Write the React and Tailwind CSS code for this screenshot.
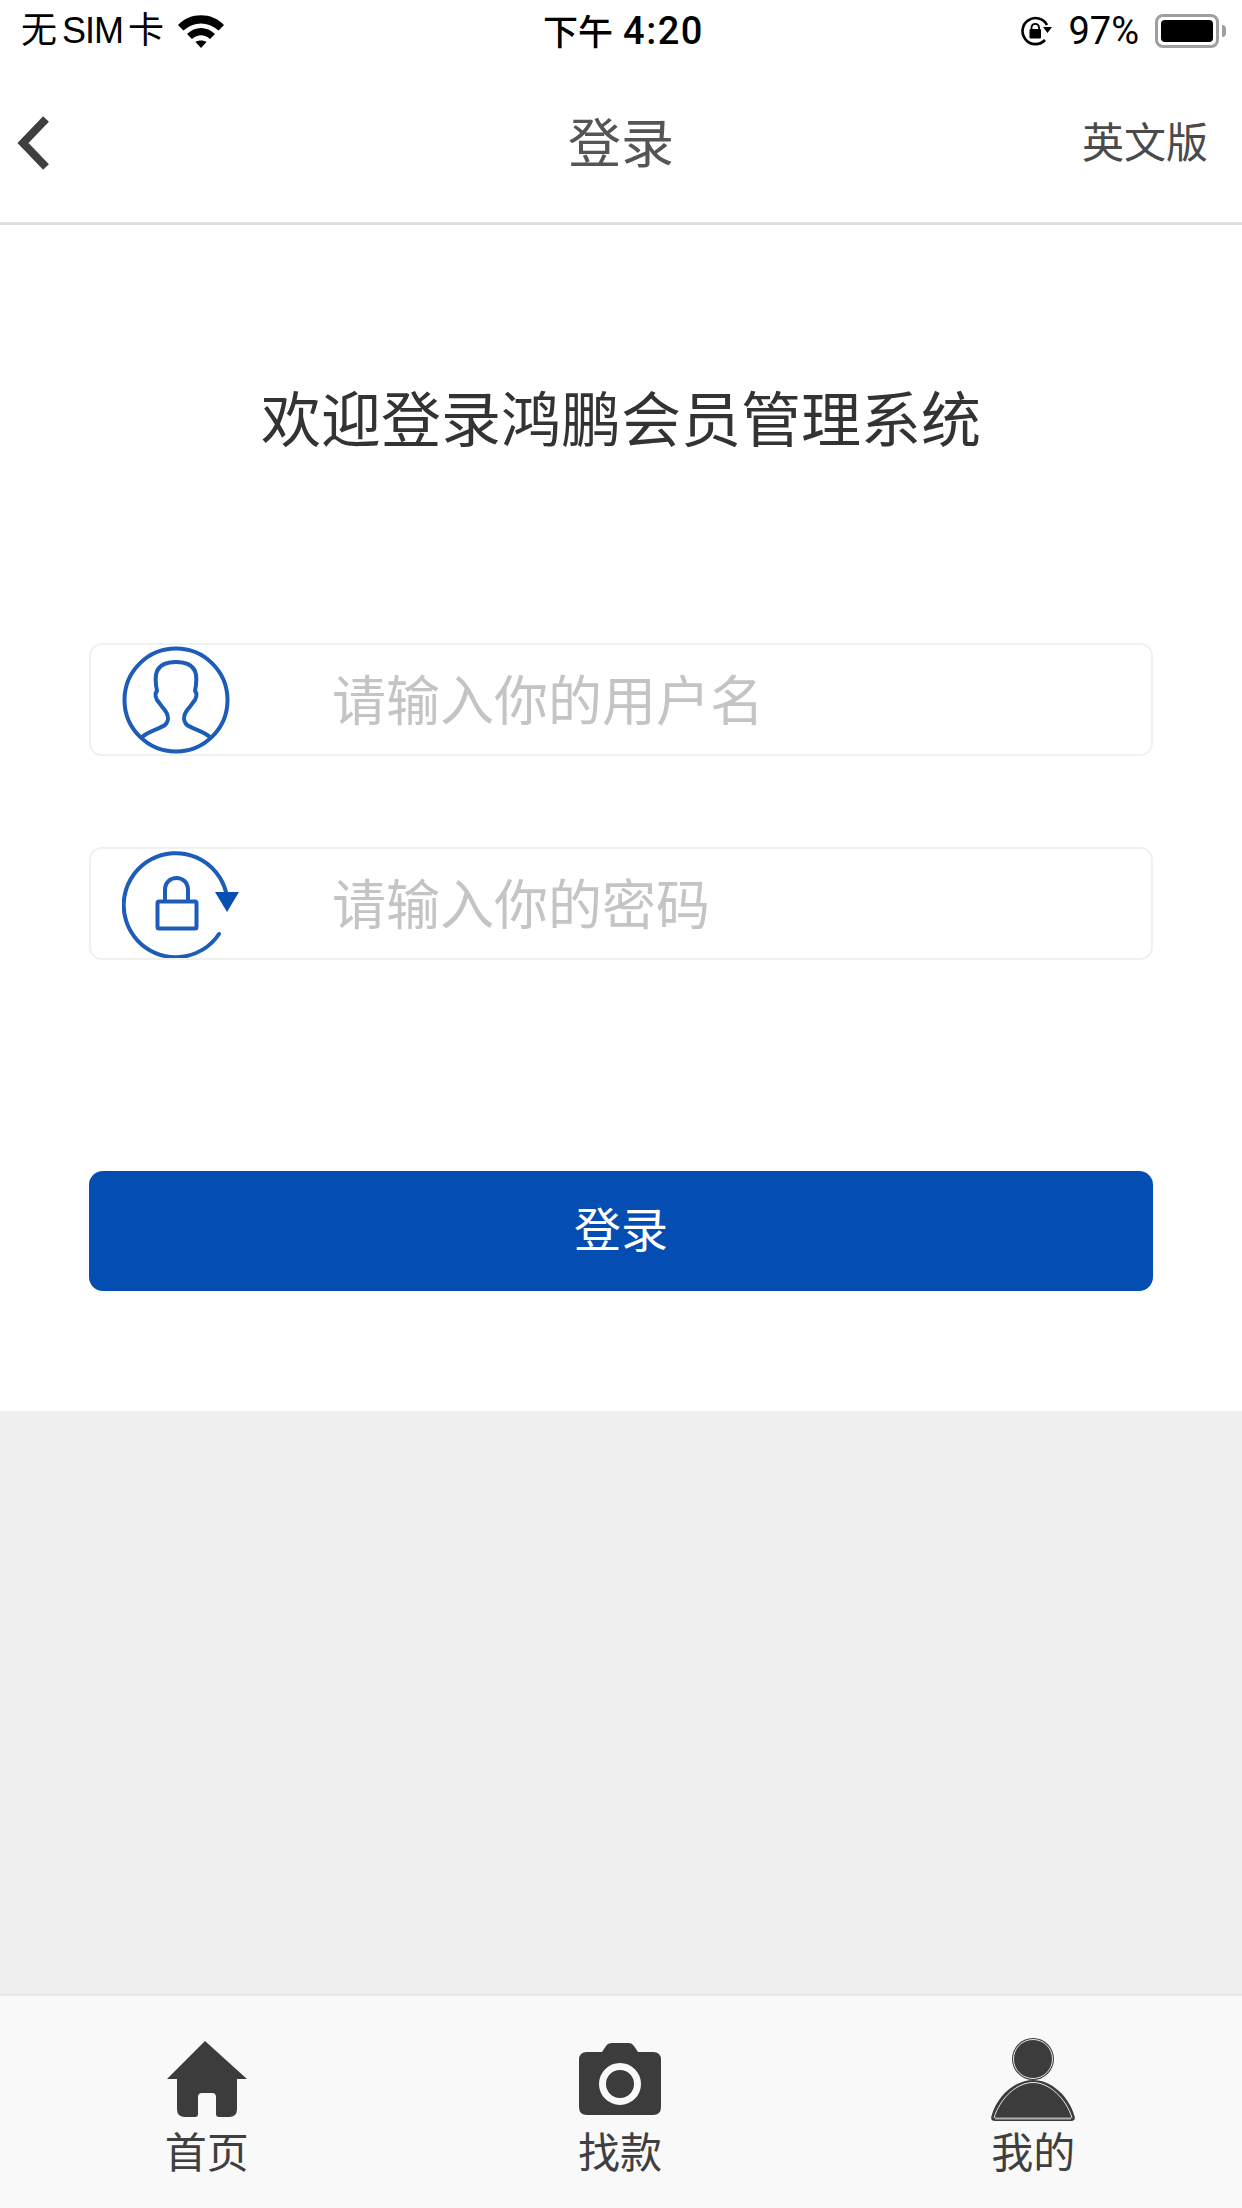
const CJK = '"Noto Sans CJK SC", "Liberation Sans", sans-serif';
const SYS = '"Liberation Sans", "Noto Sans CJK SC", sans-serif';
const NUM = 'Roboto, "Liberation Sans", sans-serif';

function Wifi() {
  return (
    <svg width="46" height="33" viewBox="0 0 46 33">
      <path d="M0 10 C12 -3 34 -3 46 10 L40.500 15.500 C30 6 16 6 5.500 15.500 Z" fill="#000" />
      <path d="M9 19 C17 11 29 11 37 19 L32 24 C26 19 20 19 14 24 Z" fill="#000" />
      <path d="M17.500 27 C20 25 26 25 28.500 27 L23 33 Z" fill="#000" />
    </svg>
  );
}

function RotationLock() {
  return (
    <svg width="32" height="30" viewBox="0 0 32 30">
      <path d="M25 24 A13 13 0 1 1 27 9" fill="none" stroke="#000" strokeWidth="2.600" />
      <path d="M23 11 L32 11 L27.500 17 Z" fill="#000" />
      <rect x="9.500" y="13" width="11.500" height="9.500" rx="1" fill="#000" />
      <path d="M11.500 13 V11 A3.800 3.800 0 0 1 19 11 V13" fill="none" stroke="#000" strokeWidth="1.800" />
    </svg>
  );
}

function Battery() {
  return (
    <div className="flex items-center">
      <div className="w-[64px] h-[34px] rounded-[8px] border-[3px] border-[#9f9f9f] p-[3px]">
        <div className="w-full h-full rounded-[4px] bg-black" />
      </div>
      <div className="w-[4px] h-[12px] ml-[3px] rounded-r-full bg-[#9f9f9f]" />
    </div>
  );
}

function UserIcon() {
  return (
    <svg width="108" height="108" viewBox="0 0 108 108" fill="none" stroke="#1d5cb8" strokeWidth="4">
      <circle cx="54" cy="54" r="51.500" />
      <path d="M20 91 C27 85 37 83 43 79 C47 75 47 69 42 63 C39 60 37 56 35 54 C33 50 33 47 35 45 C32 30 32 16 54 16 C76 16 76 30 73 45 C75 47 75 50 73 54 C71 56 69 60 66 63 C61 69 61 75 65 79 C71 83 81 85 88 91" strokeLinejoin="round" />
    </svg>
  );
}

function LockIcon() {
  return (
    <svg width="118" height="108" viewBox="0 0 118 108" fill="none" stroke="#1d5cb8" strokeWidth="4">
      <path d="M97 84 A52 52 0 1 1 104 42" strokeLinecap="round" />
      <path d="M93 42 L117 42 L105 62 Z" fill="#0a4db3" stroke="none" />
      <rect x="35.500" y="51.500" width="39" height="27" rx="1.500" />
      <path d="M43 51 V40 C43 24 66 24 66 40 V51" />
    </svg>
  );
}

function HomeIcon() {
  return (
    <svg width="80" height="76" viewBox="0 0 80 76">
      <path d="M38 0 L80 38 L70 38 L70 68 Q70 76 62 76 L52 76 Q49 76 49 73 L49 56 Q49 52 45 52 L35 52 Q31 52 31 56 L31 73 Q31 76 28 76 L18 76 Q10 76 10 68 L10 38 L0 38 Z" fill="#3c3c3c" />
    </svg>
  );
}

function CameraIcon() {
  return (
    <svg width="82" height="72" viewBox="0 0 82 72">
      <path d="M8 9 H23 L27 3 Q29 0 33 0 H50 Q53 0 55 3 L59 9 H74 Q82 9 82 17 V64 Q82 72 74 72 H8 Q0 72 0 64 V17 Q0 9 8 9 Z" fill="#3c3c3c" />
      <circle cx="41" cy="41" r="17.500" fill="none" stroke="#f9f9f9" strokeWidth="7" />
    </svg>
  );
}

function PersonIcon() {
  return (
    <svg width="84" height="83" viewBox="0 0 84 83">
      <circle cx="42" cy="21" r="21" fill="#3c3c3c" />
      <circle cx="42" cy="21" r="19.500" fill="none" stroke="#e6e6e6" strokeWidth="1" />
      <path d="M4 83 Q-1 83 0.500 78 C6 58 24 42 42 42 C60 42 78 58 83.500 78 Q85 83 80 83 Z" fill="#3c3c3c" />
      <path d="M3 80 C9 60 26 44.500 42 44.500 C58 44.500 75 60 81 80" fill="none" stroke="#e6e6e6" strokeWidth="1" />
      <path d="M4 80.500 H80" fill="none" stroke="#b0b0b0" strokeWidth="2" />
    </svg>
  );
}

function Field({ icon, placeholder }) {
  return (
    <div className="h-[113px] mx-[89px] flex items-center rounded-[13px] border-2 border-[#f0f0f0] bg-white">
      <div className="w-[241px] pl-[31px] shrink-0 flex items-center">{icon}</div>
      <span className="text-[54px] leading-none text-[#c4c4c4] -mt-[4px]">{placeholder}</span>
    </div>
  );
}

function Tab({ icon, label }) {
  return (
    <div className="flex flex-1 flex-col items-center">
      <div className="h-[88px] flex items-end">{icon}</div>
      <span className="mt-[6px] text-[42px] leading-[46px] text-[#3f3f3f]">{label}</span>
    </div>
  );
}

export default function App() {
  return (
    <div className="w-[1242px] h-[2208px] flex flex-col bg-[#f0f0f0]" style={{ fontFamily: CJK }}>
      <div className="bg-white border-b-[3px] border-[#e0e0e0] h-[225px] shrink-0 flex flex-col">
        <div className="h-[62px] flex items-center justify-between pl-[21px] pr-[16px] text-black">
          <div className="flex items-center gap-[14px] w-[400px]">
            <div className="flex items-center gap-[5px] text-[36px] leading-none" style={{ fontFamily: SYS }}>
              <span>无</span>
              <span className="tracking-[-1px]">SIM</span>
              <span>卡</span>
            </div>
            <Wifi />
          </div>
          <div className="flex items-center gap-[10px] leading-none">
            <span className="text-[35px] font-medium -mt-[4px]">下午</span>
            <span className="text-[38px] font-medium tracking-[1.500px]" style={{ fontFamily: NUM }}>4:20</span>
          </div>
          <div className="flex items-center justify-end gap-[16px] w-[400px]">
            <RotationLock />
            <span className="text-[38px] leading-none" style={{ fontFamily: NUM }}>97%</span>
            <Battery />
          </div>
        </div>
        <div className="flex-1 flex items-center justify-between">
          <div className="w-[240px] pl-[15px] flex items-center">
            <svg className="mt-[2px]" width="36" height="54" viewBox="0 0 36 54"><path d="M31 3 L8 27 L31 51" fill="none" stroke="#3f3f3f" strokeWidth="8" /></svg>
          </div>
          <span className="text-[53px] leading-none text-[#555] -mt-[4px]">登录</span>
          <div className="w-[240px] pr-[34px] text-right text-[42px] leading-none text-[#4a4a4a] -mt-[4px]">英文版</div>
        </div>
      </div>

      <main className="h-[1186px] shrink-0 bg-white flex flex-col">
        <h1 className="pt-[151px] text-center text-[60px] leading-[80px] font-normal text-[#333]">欢迎登录鸿鹏会员管理系统</h1>
        <div className="mt-[187px] flex flex-col gap-[91px]">
          <Field icon={<UserIcon />} placeholder="请输入你的用户名" />
          <Field icon={<LockIcon />} placeholder="请输入你的密码" />
        </div>
        <button className="mt-[211px] mx-[89px] h-[120px] pb-[7px] rounded-[14px] bg-[#044db3] text-white text-[47px]">登录</button>
      </main>

      <div className="flex-1" />

      <nav className="h-[215px] shrink-0 bg-[#f9f9f9] border-t-[3px] border-[#e9e9e9] flex pt-[37px] pr-[2px]">
        <Tab icon={<div className="mb-[4px]"><HomeIcon /></div>} label="首页" />
        <Tab icon={<div className="mb-[6px]"><CameraIcon /></div>} label="找款" />
        <Tab icon={<PersonIcon />} label="我的" />
      </nav>
    </div>
  );
}
